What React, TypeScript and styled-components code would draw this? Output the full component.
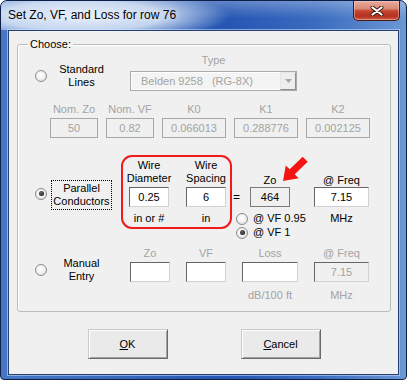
import styled, { createGlobalStyle } from 'styled-components'

const GlobalStyle = createGlobalStyle`
  html, body {
    margin: 0;
    padding: 0;
    background: #ffffff;
  }
  body {
    font-family: "Liberation Sans", Arial, sans-serif;
    font-size: 11px;
    color: #000;
  }
`

const Window = styled.div`
  width: 407px;
  height: 380px;
  box-sizing: border-box;
  display: flex;
  flex-direction: column;
  border: 1px solid #0d1f47;
  border-radius: 7px 7px 4px 4px;
  overflow: hidden;
  background: linear-gradient(90deg, #4677c6 0%, #3767bb 30%, #2455b2 55%, #3a6cc0 78%, #6b97d3 100%);
`

const TitleBar = styled.div`
  height: 29px;
  flex-shrink: 0;
  display: flex;
  justify-content: space-between;
  align-items: flex-start;
  background:
    radial-gradient(ellipse 150px 26px at 80px 15px, rgba(236, 243, 252, 0.97) 0%, rgba(220, 232, 248, 0.85) 55%, rgba(200, 218, 242, 0) 100%),
    linear-gradient(180deg, rgba(255, 255, 255, 0.28) 0%, rgba(255, 255, 255, 0) 60%);
`

const Title = styled.div`
  padding-left: 7px;
  line-height: 29px;
  font-size: 12px;
  color: #000;
  text-shadow: 0 0 6px rgba(255, 255, 255, 0.9);
  white-space: nowrap;
`

const CloseBtn = styled.div`
  width: 45px;
  height: 19px;
  margin-right: 6px;
  display: flex;
  align-items: center;
  justify-content: center;
  border: 1px solid #4a1a14;
  border-top: none;
  border-radius: 0 0 5px 5px;
  background: linear-gradient(180deg, #e9ab9d 0%, #d88a78 40%, #c5452f 52%, #b3311f 80%, #cf5f48 100%);
  box-shadow: inset 0 0 0 1px rgba(255, 210, 200, 0.45);
  & > svg {
    width: 14px;
    height: 10px;
  }
`

const Client = styled.div`
  flex: 1;
  margin: 0 7px 7px;
  display: flex;
  flex-direction: column;
  background: #f0f0f0;
  border: 1px solid #243f74;
  box-shadow: 0 0 0 1px rgba(210, 226, 248, 0.55);
  padding: 7px 7px 15px 8px;
`

const GroupBox = styled.fieldset`
  margin: 0;
  padding: 0 0 9px;
  min-width: 0;
  border: 1px solid #bcbcbc;
  border-radius: 3px;
  box-shadow: inset 1px 1px 0 #ffffff;
`

const Caption = styled.legend`
  margin-left: 10px;
  padding: 0 2px;
  line-height: 13px;
`

const Row = styled.div<{ $top: number }>`
  position: relative;
  display: flex;
  align-items: flex-start;
  padding-left: 17px;
  margin-top: ${p => p.$top}px;
`

const Option = styled.div<{ $top?: number; $end?: boolean }>`
  display: flex;
  align-items: center;
  gap: 4px;
  flex-shrink: 0;
  margin-top: ${p => p.$top ?? 0}px;
  align-self: ${p => (p.$end ? 'flex-end' : 'flex-start')};
`

const OptionText = styled.div<{ $focus?: boolean }>`
  width: 59px;
  padding: 1px 0;
  border: 1px dotted ${p => (p.$focus ? '#000' : 'transparent')};
  text-align: center;
  line-height: 13px;
`

const Radio = styled.span<{ $on?: boolean; $lift?: number }>`
  position: relative;
  width: 12px;
  height: 12px;
  box-sizing: border-box;
  flex-shrink: 0;
  margin-top: ${p => -(p.$lift ?? 0)}px;
  border-radius: 50%;
  border: 1px solid #8c8c8c;
  background: radial-gradient(circle at 45% 40%, #ffffff 0%, #f3f3f3 45%, #d4d4d4 100%);
  &::after {
    content: '';
    position: absolute;
    inset: 2.5px;
    border-radius: 50%;
    background: ${p => (p.$on ? 'radial-gradient(circle at 40% 35%, #6a6a6a, #0a0a0a)' : 'transparent')};
  }
`

const TypeCol = styled.div`
  display: flex;
  flex-direction: column;
  align-items: center;
  gap: 4px;
  margin-left: 18px;
`

const Label = styled.div<{ $off?: boolean }>`
  height: 13px;
  line-height: 13px;
  white-space: nowrap;
  color: ${p => (p.$off ? '#a3a3a3' : '#000')};
`

const Combo = styled.div`
  width: 167px;
  height: 20px;
  box-sizing: border-box;
  display: flex;
  align-items: center;
  justify-content: space-between;
  border: 1px solid #a9a9a9;
  background: #f4f4f4;
  box-shadow: inset 0 0 0 1px #ffffff;
`

const ComboText = styled.span`
  padding-left: 10px;
  color: #a3a3a3;
  white-space: pre;
`

const ComboArrow = styled.div`
  width: 16px;
  height: 18px;
  box-sizing: border-box;
  display: flex;
  align-items: center;
  justify-content: center;
  border: 1px solid;
  border-color: #e6e6e6 #8f8f8f #8f8f8f #e6e6e6;
  background: #ededed;
  & > svg {
    width: 7px;
    height: 4px;
  }
`

const Fields = styled.div<{ $gap: number; $left: number }>`
  display: flex;
  gap: ${p => p.$gap}px;
  margin-left: ${p => p.$left}px;
`

const Field = styled.div<{ $w: number }>`
  width: ${p => p.$w}px;
  display: flex;
  flex-direction: column;
  align-items: center;
  gap: 2px;
`

type BoxKind = 'off' | 'on' | 'ro' | 'dim'

const Box = styled.input<{ $kind: BoxKind; $w?: number }>`
  width: ${p => (p.$w ? `${p.$w}px` : '100%')};
  height: 20px;
  box-sizing: border-box;
  margin: 0;
  padding: 0;
  outline: none;
  text-align: center;
  font: 11px "Liberation Sans", Arial, sans-serif;
  border: 1px solid;
  border-color: ${p =>
    p.$kind === 'off' ? '#a8a8a8' : p.$kind === 'ro' ? '#7a7a7a' : '#666666 #d2d2d2 #d2d2d2 #666666'};
  background: ${p => (p.$kind === 'on' ? '#ffffff' : '#f0f0f0')};
  color: ${p => (p.$kind === 'off' || p.$kind === 'dim' ? '#a3a3a3' : '#000')};
  -webkit-text-fill-color: ${p => (p.$kind === 'off' || p.$kind === 'dim' ? '#a3a3a3' : '#000')};
  opacity: 1;
`

const WireGroup = styled.div`
  display: flex;
  gap: 9px;
  margin-left: 9px;
  padding: 2px 0 2px 2px;
  border: 2px solid #f01c1c;
  border-radius: 11px;
`

const WireCol = styled.div`
  width: 48px;
  display: flex;
  flex-direction: column;
  align-items: center;
`

const WireBox = styled(Box)`
  margin-top: 2px;
`

const SubLabel = styled(Label)`
  margin-top: 5px;
`

const ZoGrid = styled.div`
  display: grid;
  grid-template-columns: 18px 40px 24px 55px;
  grid-template-rows: 14px 20px 18px 15px;
  margin-top: 18px;
`

const Cell = styled.div<{ $col: string; $row: number; $align?: string; $justify?: string }>`
  grid-column: ${p => p.$col};
  grid-row: ${p => p.$row};
  align-self: ${p => p.$align ?? 'center'};
  justify-self: ${p => p.$justify ?? 'center'};
  line-height: 13px;
  white-space: nowrap;
`

const Equals = styled(Cell)`
  padding-left: 1px;
  font-size: 12px;
`

const RadioLine = styled(Cell)`
  display: flex;
  align-items: center;
  gap: 5px;
  padding-left: 4px;
`

const Arrow = styled.svg`
  position: absolute;
  left: 263px;
  top: 1px;
  width: 28px;
  height: 28px;
`

const Buttons = styled.div`
  display: flex;
  justify-content: center;
  gap: 73px;
  margin-top: 17px;
`

const Btn = styled.button`
  width: 80px;
  height: 30px;
  padding: 0;
  font: 11px "Liberation Sans", Arial, sans-serif;
  color: #000;
  border: 1px solid;
  border-color: #c9c9c9 #6a6a6a #6a6a6a #c9c9c9;
  background: #eaeaea;
  box-shadow: inset 1px 1px 0 #ffffff, inset -1px -1px 0 #a3a3a3;
  & u {
    text-decoration: underline;
  }
`

const std = [
  { label: 'Nom. Zo', value: '50', w: 48 },
  { label: 'Nom. VF', value: '0.82', w: 48 },
  { label: 'K0', value: '0.066013', w: 64 },
  { label: 'K1', value: '0.288776', w: 64 },
  { label: 'K2', value: '0.002125', w: 64 },
]

const manual: { label: string; value: string; w: number; kind: BoxKind; sub: string }[] = [
  { label: 'Zo', value: '', w: 40, kind: 'on', sub: '' },
  { label: 'VF', value: '', w: 40, kind: 'on', sub: '' },
  { label: 'Loss', value: '', w: 56, kind: 'on', sub: 'dB/100 ft' },
  { label: '@ Freq', value: '7.15', w: 55, kind: 'dim', sub: 'MHz' },
]

export default function App() {
  return (
    <>
      <GlobalStyle />
      <Window>
        <TitleBar>
          <Title>Set Zo, VF, and Loss for row 76</Title>
          <CloseBtn>
            <svg viewBox="0 0 14 10">
              <path d="M2.5 1.5 L11.5 8.5 M11.5 1.5 L2.5 8.5" stroke="#3d1510" strokeWidth="4" strokeLinecap="round" />
              <path d="M2.5 1.5 L11.5 8.5 M11.5 1.5 L2.5 8.5" stroke="#ffffff" strokeWidth="2.2" strokeLinecap="round" />
            </svg>
          </CloseBtn>
        </TitleBar>
        <Client>
          <GroupBox>
            <Caption>Choose:</Caption>

            <Row $top={3}>
              <Option $end>
                <Radio />
                <OptionText>Standard<br />Lines</OptionText>
              </Option>
              <TypeCol>
                <Label $off>Type</Label>
                <Combo>
                  <ComboText>{'Belden 9258   (RG-8X)'}</ComboText>
                  <ComboArrow>
                    <svg viewBox="0 0 7 4">
                      <path d="M0 0 H7 L3.5 4 Z" fill="#a8a8a8" />
                    </svg>
                  </ComboArrow>
                </Combo>
              </TypeCol>
            </Row>
            <Row $top={12}>
              <Fields $gap={8} $left={15}>
                {std.map(f => (
                  <Field key={f.label} $w={f.w}>
                    <Label $off>{f.label}</Label>
                    <Box $kind="off" disabled value={f.value} readOnly />
                  </Field>
                ))}
              </Fields>
            </Row>

            <Row $top={17}>
              <Option $top={25}>
                <Radio $on $lift={3} />
                <OptionText $focus>Parallel<br />Conductors</OptionText>
              </Option>
              <WireGroup>
                <WireCol>
                  <Label>Wire</Label>
                  <Label>Diameter</Label>
                  <WireBox $kind="on" $w={40} value="0.25" readOnly />
                  <SubLabel>in or #</SubLabel>
                </WireCol>
                <WireCol>
                  <Label>Wire</Label>
                  <Label>Spacing</Label>
                  <WireBox $kind="on" $w={40} value="6" readOnly />
                  <SubLabel>in</SubLabel>
                </WireCol>
              </WireGroup>
              <ZoGrid>
                <Cell $col="2" $row={1}>Zo</Cell>
                <Cell $col="4" $row={1}>@ Freq</Cell>
                <Equals $col="1" $row={2} $justify="start">=</Equals>
                <Cell $col="2" $row={2}>
                  <Box $kind="ro" $w={40} value="464" readOnly />
                </Cell>
                <Cell $col="4" $row={2}>
                  <Box $kind="on" $w={55} value="7.15" readOnly />
                </Cell>
                <RadioLine $col="1 / 4" $row={3} $align="end" $justify="start">
                  <Radio />
                  @ VF 0.95
                </RadioLine>
                <Cell $col="4" $row={3} $align="end">MHz</Cell>
                <RadioLine $col="1 / 4" $row={4} $justify="start">
                  <Radio $on />
                  @ VF 1
                </RadioLine>
              </ZoGrid>
              <Arrow viewBox="0 0 28 28">
                <polygon points="2,25 4.8,9.4 8.7,13.3 21.7,0.8 26.7,5.8 13.7,18.3 17.6,22.2" fill="#f51414" />
              </Arrow>
            </Row>

            <Row $top={7}>
              <Option $top={8}>
                <Radio />
                <OptionText>Manual<br />Entry</OptionText>
              </Option>
              <Fields $gap={16} $left={18}>
                {manual.map(f => (
                  <Field key={f.label} $w={f.w}>
                    <Label $off>{f.label}</Label>
                    <Box $kind={f.kind} value={f.value} readOnly />
                    <SubLabel $off>{f.sub}</SubLabel>
                  </Field>
                ))}
              </Fields>
            </Row>
          </GroupBox>
          <Buttons>
            <Btn><u>O</u>K</Btn>
            <Btn><u>C</u>ancel</Btn>
          </Buttons>
        </Client>
      </Window>
    </>
  )
}
